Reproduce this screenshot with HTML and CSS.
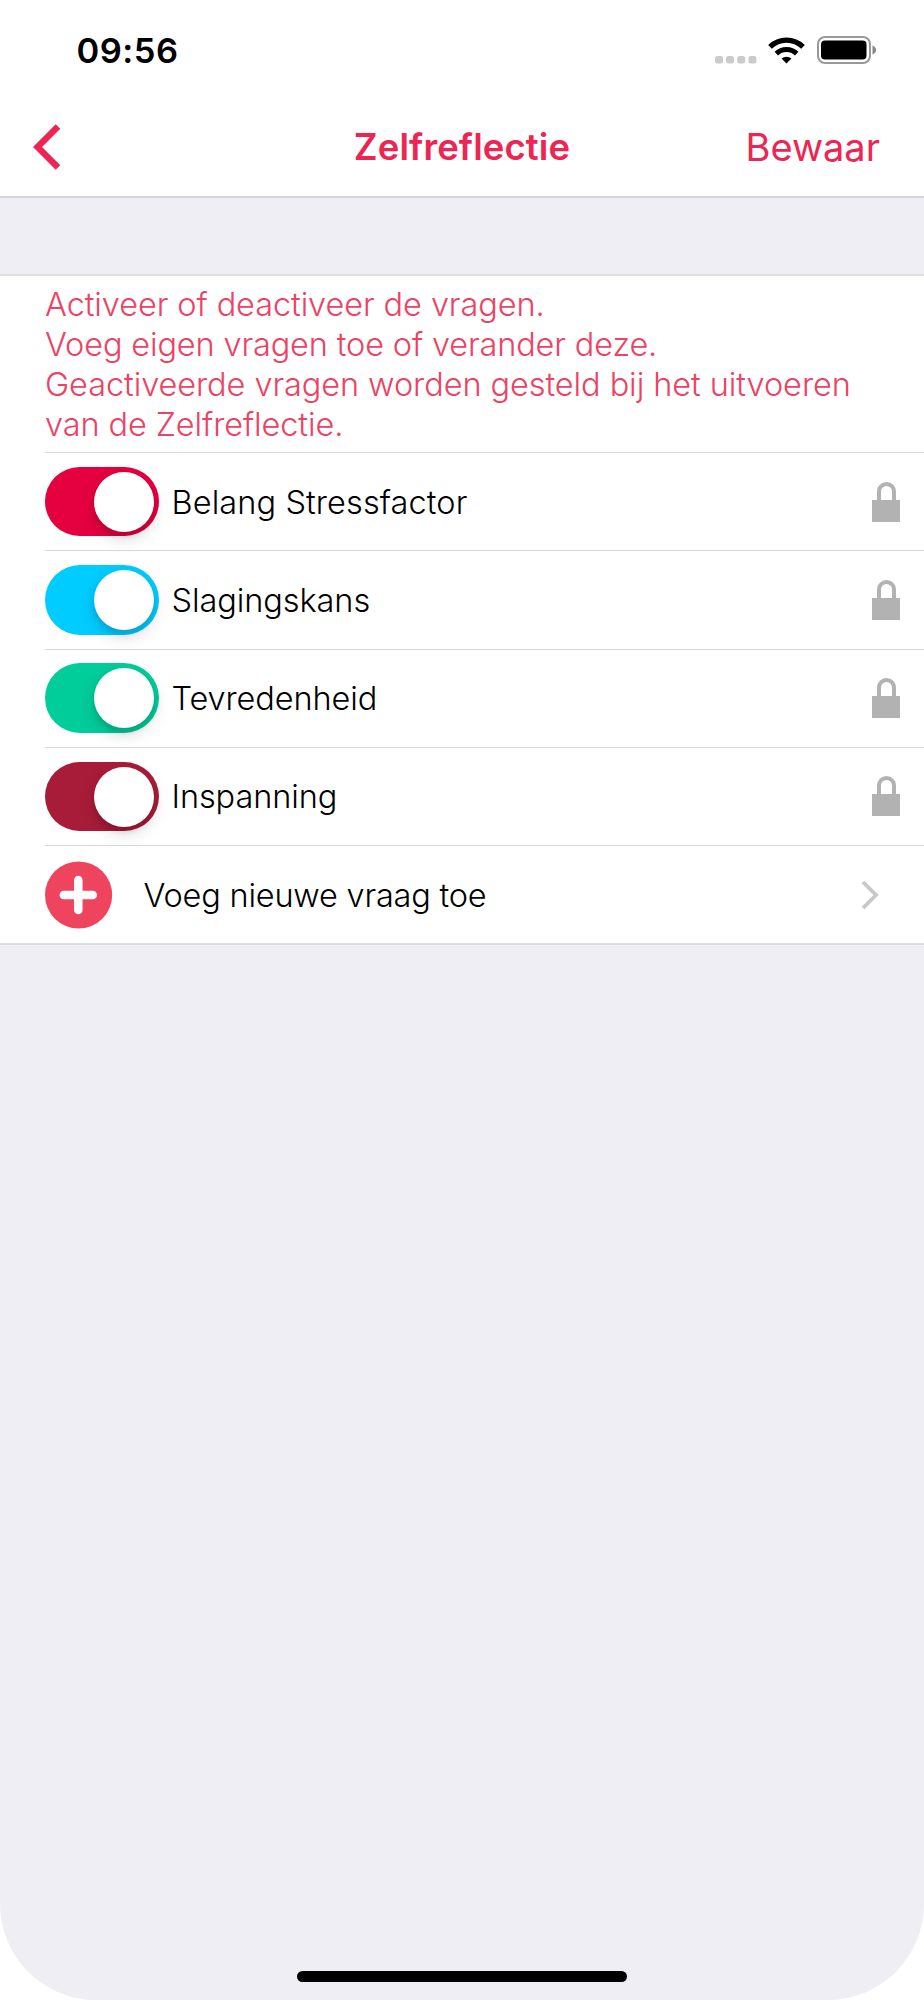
FILE: index.html
```html
<!DOCTYPE html>
<html lang="nl">
<head>
<meta charset="utf-8">
<title>Zelfreflectie</title>
<link rel="stylesheet" href="styles.css">
</head>
<body>
<svg class="defs" width="0" height="0">
  <symbol id="lock" viewBox="0 0 28 40">
    <path d="M0 18H28V40H0Z" fill="#b2b2b2"/>
    <path d="M7 19V9.500a7.500 7.500 0 0 1 15 0V19" fill="none" stroke="#b2b2b2" stroke-width="4"/>
  </symbol>
</svg>
<div class="screen">
  <header class="top">
    <div class="status">
      <span class="time">09:56</span>
      <div class="status-icons">
        <svg width="42" height="8" viewBox="0 0 42 8" fill="#cbcbcb"><rect width="8" height="7.500" rx="2.500"/><rect x="11" width="8" height="7.500" rx="2.500"/><rect x="22.200" width="8" height="7.500" rx="2.500"/><rect x="33.400" width="8" height="7.500" rx="2.500"/></svg>
        <svg class="wifi" width="37" height="27" viewBox="0 0 37 27" fill="none" stroke="#000"><path d="M2 9.800A23.500 23.500 0 0 1 35 9.800" stroke-width="5.200"/><path d="M8.300 16.600A14.600 14.600 0 0 1 28.700 16.600" stroke-width="5"/><path d="M13.600 21.600A7.500 7.500 0 0 1 23.400 21.600L18.500 26.400Z" fill="#000" stroke="none"/></svg>
        <svg class="battery" width="60" height="28" viewBox="0 0 60 28"><rect x="1" y="1" width="52" height="26" rx="7" fill="none" stroke="#999" stroke-width="2"/><rect x="4" y="4.500" width="45.500" height="19" rx="4" fill="#000"/><path d="M55.500 9.500Q59 11 59 14T55.500 18.500Z" fill="#888"/></svg>
      </div>
    </div>
    <nav class="nav">
      <svg class="back" width="28" height="46" viewBox="0 0 28 46"><path d="M25 2.500L4.500 23L25 43.500" fill="none" stroke="#ec2654" stroke-width="6.500"/></svg>
      <h1 class="title">Zelfreflectie</h1>
      <span class="save">Bewaar</span>
    </nav>
  </header>
  <main class="list">
    <p class="info"><span class="l1">Activeer of deactiveer de vragen.</span><br><span class="l2">Voeg eigen vragen toe of verander deze.</span><br><span class="l3">Geactiveerde vragen worden gesteld bij het uitvoeren</span><br><span class="l4">van de Zelfreflectie.</span></p>
    <div class="row"><span class="toggle red"></span><span class="label r1">Belang Stressfactor</span><svg class="lock"><use href="#lock"/></svg></div>
    <div class="row"><span class="toggle blue"></span><span class="label r2">Slagingskans</span><svg class="lock"><use href="#lock"/></svg></div>
    <div class="row"><span class="toggle green"></span><span class="label r3">Tevredenheid</span><svg class="lock"><use href="#lock"/></svg></div>
    <div class="row"><span class="toggle wine"></span><span class="label r4">Inspanning</span><svg class="lock"><use href="#lock"/></svg></div>
    <div class="row add">
      <svg width="68" height="68" viewBox="0 0 68 68"><circle cx="33.600" cy="34" r="33.600" fill="#ef445e"/><path d="M33.300 19V49M18.800 34H47.800" stroke="#fff" stroke-width="8.500" stroke-linecap="round" fill="none"/></svg>
      <span class="label r5">Voeg nieuwe vraag toe</span>
      <svg class="chevron" width="20" height="30" viewBox="0 0 20 30"><path d="M2 2L15 15L2 28" fill="none" stroke="#c7c7cc" stroke-width="3.800"/></svg>
    </div>
  </main>
  <div class="home"></div>
</div>
</body>
</html>
```

FILE: styles.css
```css
* { box-sizing: border-box; }
body { margin: 0; background: #fff; font-family: Inter, "Liberation Sans", sans-serif; color: #000; }
.defs { display: block; }
.screen { width: 924px; height: 2000px; background: #efeef5; border-radius: 0 0 96px 96px; overflow: hidden; display: flex; flex-direction: column; }
.top { height: 198px; flex: none; background: #fff; border-bottom: 2px solid #d7d7d9; }
.status { height: 98px; padding: 0 47px 0 76.500px; display: flex; justify-content: space-between; align-items: flex-start; }
.time { margin-top: 30px; font-size: 34.5px; line-height: 41px; font-weight: 600; letter-spacing: .5px; }
.status-icons { display: flex; align-items: flex-end; margin-top: 36px; height: 28px; }
.wifi { margin-left: 11px; }
.battery { margin-left: 12px; }
.nav { height: 98px; display: grid; grid-template-columns: 1fr auto 1fr; align-items: center; padding: 0 44px; }
.back { margin-left: -11px; }
.title { margin: 0; font-size: 36.5px; line-height: 44px; font-weight: 600; letter-spacing: .1px; color: #ec2654; }
.save { justify-self: end; font-size: 38px; line-height: 46px; color: #ec2654; }
.list { margin-top: 76px; flex: none; background: #fff; border-top: 2px solid #dedee3; border-bottom: 2px solid #dcdce1; }
.info { margin: 0; height: 176px; padding: 8.500px 0 0 45px; font-size: 32.5px; line-height: 40px; font-weight: 300; color: #ec4263; white-space: nowrap; }
.l1 { letter-spacing: -.09px; }
.l2 { letter-spacing: -.15px; }
.l3 { letter-spacing: -.08px; }
.l4 { letter-spacing: -.1px; }
.row { height: 98.250px; margin-left: 45px; padding-right: 24px; border-top: 1.500px solid #d8d8da; display: flex; align-items: center; }
.toggle { width: 113.500px; height: 69.500px; border-radius: 35px; padding: 5px 4.500px; display: flex; justify-content: flex-end; }
.toggle::after { content: ""; width: 60px; height: 60px; border-radius: 50%; background: #fff; box-shadow: 0 6px 16px rgba(0,0,0,.17), 0 5px 4px rgba(0,0,0,.07); }
.red { background: #e5003f; }
.blue { background: #00ccff; }
.green { background: #00cd9a; }
.wine { background: #a91c39; }
.label { margin-left: 13px; padding-top: 2px; font-size: 32.5px; line-height: 40px; font-weight: 300; white-space: nowrap; }
.r1 { letter-spacing: .1px; }
.r2 { letter-spacing: -.08px; }
.r3 { letter-spacing: -.12px; }
.r4 { letter-spacing: -.1px; }
.r5 { letter-spacing: -.21px; }
.lock { width: 28px; height: 40px; margin-left: auto; }
.add { padding-right: 43px; }
.add .label { margin-left: 30.500px; }
.chevron { margin-left: auto; }
.home { width: 330px; height: 11px; border-radius: 6px; background: #000; margin: auto auto 18px; }
```
